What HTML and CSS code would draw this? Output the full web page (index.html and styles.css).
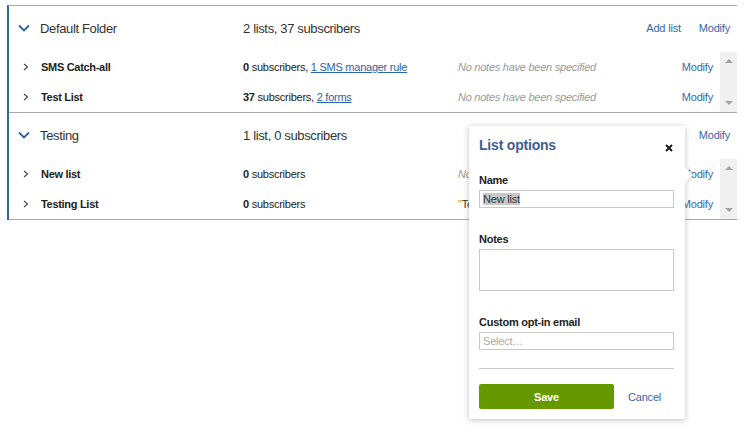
FILE: index.html
```html
<!DOCTYPE html>
<html>
<head>
<meta charset="utf-8">
<link rel="stylesheet" href="styles.css">
</head>
<body>
<div class="folders">
  <section class="folder">
    <div class="folder-head">
      <span class="fchev"><svg width="12" height="8" viewBox="0 0 12 8"><path d="M1 1.5 L6 6.5 L11 1.5" fill="none" stroke="#2f5f93" stroke-width="1.8"/></svg></span>
      <span class="fname">Default Folder</span>
      <span class="fstats">2 lists, 37 subscribers</span>
      <span class="factions"><a class="link">Add list</a><a class="link">Modify</a></span>
    </div>
    <div class="lists">
      <div class="rows">
        <div class="row">
          <span class="rchev"><svg width="6" height="8" viewBox="0 0 6 8"><path d="M1 1 L4.5 4 L1 7" fill="none" stroke="#444" stroke-width="1.1"/></svg></span>
          <span class="lname">SMS Catch-all</span>
          <span class="lstats"><b>0</b> subscribers, <a class="ulink">1 SMS manager rule</a></span>
          <span class="notes">No notes have been specified</span>
          <a class="link">Modify</a>
        </div>
        <div class="row">
          <span class="rchev"><svg width="6" height="8" viewBox="0 0 6 8"><path d="M1 1 L4.5 4 L1 7" fill="none" stroke="#444" stroke-width="1.1"/></svg></span>
          <span class="lname">Test List</span>
          <span class="lstats"><b>37</b> subscribers, <a class="ulink">2 forms</a></span>
          <span class="notes">No notes have been specified</span>
          <a class="link">Modify</a>
        </div>
      </div>
      <div class="scrollbar"><span class="up"></span><span class="down"></span></div>
    </div>
  </section>
  <section class="folder">
    <div class="folder-head">
      <span class="fchev"><svg width="12" height="8" viewBox="0 0 12 8"><path d="M1 1.5 L6 6.5 L11 1.5" fill="none" stroke="#2f5f93" stroke-width="1.8"/></svg></span>
      <span class="fname">Testing</span>
      <span class="fstats">1 list, 0 subscribers</span>
      <span class="factions"><a class="link">Add list</a><a class="link">Modify</a></span>
    </div>
    <div class="lists">
      <div class="rows">
        <div class="row">
          <span class="rchev"><svg width="6" height="8" viewBox="0 0 6 8"><path d="M1 1 L4.5 4 L1 7" fill="none" stroke="#444" stroke-width="1.1"/></svg></span>
          <span class="lname">New list</span>
          <span class="lstats"><b>0</b> subscribers</span>
          <span class="notes">No notes have been specified</span>
          <a class="link">Modify</a>
        </div>
        <div class="row">
          <span class="rchev"><svg width="6" height="8" viewBox="0 0 6 8"><path d="M1 1 L4.5 4 L1 7" fill="none" stroke="#444" stroke-width="1.1"/></svg></span>
          <span class="lname">Testing List</span>
          <span class="lstats"><b>0</b> subscribers</span>
          <span class="notes quoted"><span class="q">"</span>Testing list notes<span class="q">"</span></span>
          <a class="link">Modify</a>
        </div>
      </div>
      <div class="scrollbar"><span class="up"></span><span class="down"></span></div>
    </div>
  </section>
</div>

<div class="popup">
  <div class="arrow"></div>
  <div class="popup-head">
    <span class="ptitle">List options</span>
    <span class="close" aria-label="Close"><svg width="8" height="8" viewBox="0 0 8 8"><path d="M1 1 L7 7 M7 1 L1 7" stroke="#1a1a1a" stroke-width="2"/></svg></span>
  </div>
  <label class="plabel first">Name</label>
  <div class="pinput"><span class="sel">New list</span></div>
  <label class="plabel">Notes</label>
  <div class="ptextarea"></div>
  <label class="plabel">Custom opt-in email</label>
  <div class="pinput placeholder">Select…</div>
  <hr class="psep">
  <div class="pbuttons">
    <button class="save">Save</button>
    <a class="link cancel">Cancel</a>
  </div>
</div>
</body>
</html>
```
FILE: styles.css
```css
* { box-sizing: border-box; }
html, body { margin: 0; padding: 0; background: #fff; }
body {
  font-family: "Liberation Sans", Arial, sans-serif;
  color: #222;
  position: relative;
  width: 747px;
  height: 429px;
  overflow: hidden;
}
.folders {
  margin: 5px 0 0 7px;
  width: 730px;
  border-top: 1px solid #a9a9a9;
  border-left: 2px solid #336699;
}
.folder { border-bottom: 1px solid #a9a9a9; }
.folder-head {
  height: 46px;
  display: flex;
  align-items: center;
  padding-right: 7px;
  padding-bottom: 2px;
  font-size: 13px;
  letter-spacing: -0.35px;
  color: #333;
}
.fchev { width: 31px; padding-left: 9px; display: flex; align-items: center; }
.fname { width: 203px; }
.fstats { flex: 1; }
.factions { display: flex; gap: 18px; font-size: 11px; letter-spacing: -0.2px; }
.link { color: #3566ad; text-decoration: none; font-size: 11px; letter-spacing: -0.2px; }
.lists { display: flex; height: 60px; }
.rows { flex: 1; }
.row {
  height: 30px;
  display: flex;
  align-items: center;
  padding-right: 7px;
  font-size: 11px;
  letter-spacing: -0.25px;
}
.rchev { width: 32px; padding-left: 14px; display: flex; align-items: center; }
.lname { width: 202px; font-weight: bold; color: #222; letter-spacing: -0.3px; }
.lstats { width: 215px; color: #222; }
.lstats b { font-weight: bold; }
.ulink { color: #2a64a8; text-decoration: underline; }
.notes { flex: 1; font-style: italic; color: #999; }
.notes.quoted { font-style: normal; color: #333; }
.q { color: #d98a2b; }
.scrollbar {
  width: 17px;
  background: #f0f0f0;
  display: flex;
  flex-direction: column;
  justify-content: space-between;
  align-items: center;
  padding: 7px 0;
}
.up { width: 0; height: 0; border-left: 4px solid transparent; border-right: 4px solid transparent; border-bottom: 4px solid #a3a3a3; }
.down { width: 0; height: 0; border-left: 4px solid transparent; border-right: 4px solid transparent; border-top: 4px solid #a3a3a3; }

.popup {
  position: absolute;
  left: 469px;
  top: 126px;
  width: 216px;
  height: 293px;
  background: #fff;
  box-shadow: 0 1px 6px rgba(0,0,0,0.25);
  padding: 10px 11px 10px 10px;
  display: flex;
  flex-direction: column;
}
.arrow {
  position: absolute;
  right: -8px;
  top: 41px;
  width: 0; height: 0;
  border-top: 8px solid transparent;
  border-bottom: 8px solid transparent;
  border-left: 8px solid #fff;
  filter: drop-shadow(2px 0 1px rgba(0,0,0,0.12));
}
.popup-head {
  display: flex;
  justify-content: space-between;
  align-items: center;
  height: 18px;
}
.ptitle { font-size: 14px; font-weight: bold; color: #3b5f92; letter-spacing: -0.2px; }
.close { display: flex; padding-top: 6px; padding-right: 1px; }
.plabel {
  display: block;
  font-size: 11px;
  font-weight: bold;
  line-height: 14px;
  color: #222;
  letter-spacing: -0.25px;
  margin-top: 24px;
  margin-bottom: 3px;
}
.plabel.first { margin-top: 19px; }
.pinput {
  height: 18px;
  border: 1px solid #c8c8c8;
  font-size: 11px;
  line-height: 16px;
  padding-left: 3px;
  color: #333;
  letter-spacing: -0.2px;
}
.sel { background: #c8c8c8; }
.pinput.placeholder { color: #aaa; }
.ptextarea { height: 42px; border: 1px solid #c8c8c8; }
.psep { border: 0; border-top: 1px solid #c8c8c8; margin: 18px 0 0 0; height: 0; }
.pbuttons { display: flex; align-items: center; margin-top: 15px; }
.save {
  width: 135px;
  height: 25px;
  background: #669900;
  border: 0;
  border-radius: 2px;
  color: #fff;
  font-family: "Liberation Sans", Arial, sans-serif;
  font-weight: bold;
  font-size: 11px;
  letter-spacing: -0.2px;
}
.cancel { margin-left: 14px; }
```
